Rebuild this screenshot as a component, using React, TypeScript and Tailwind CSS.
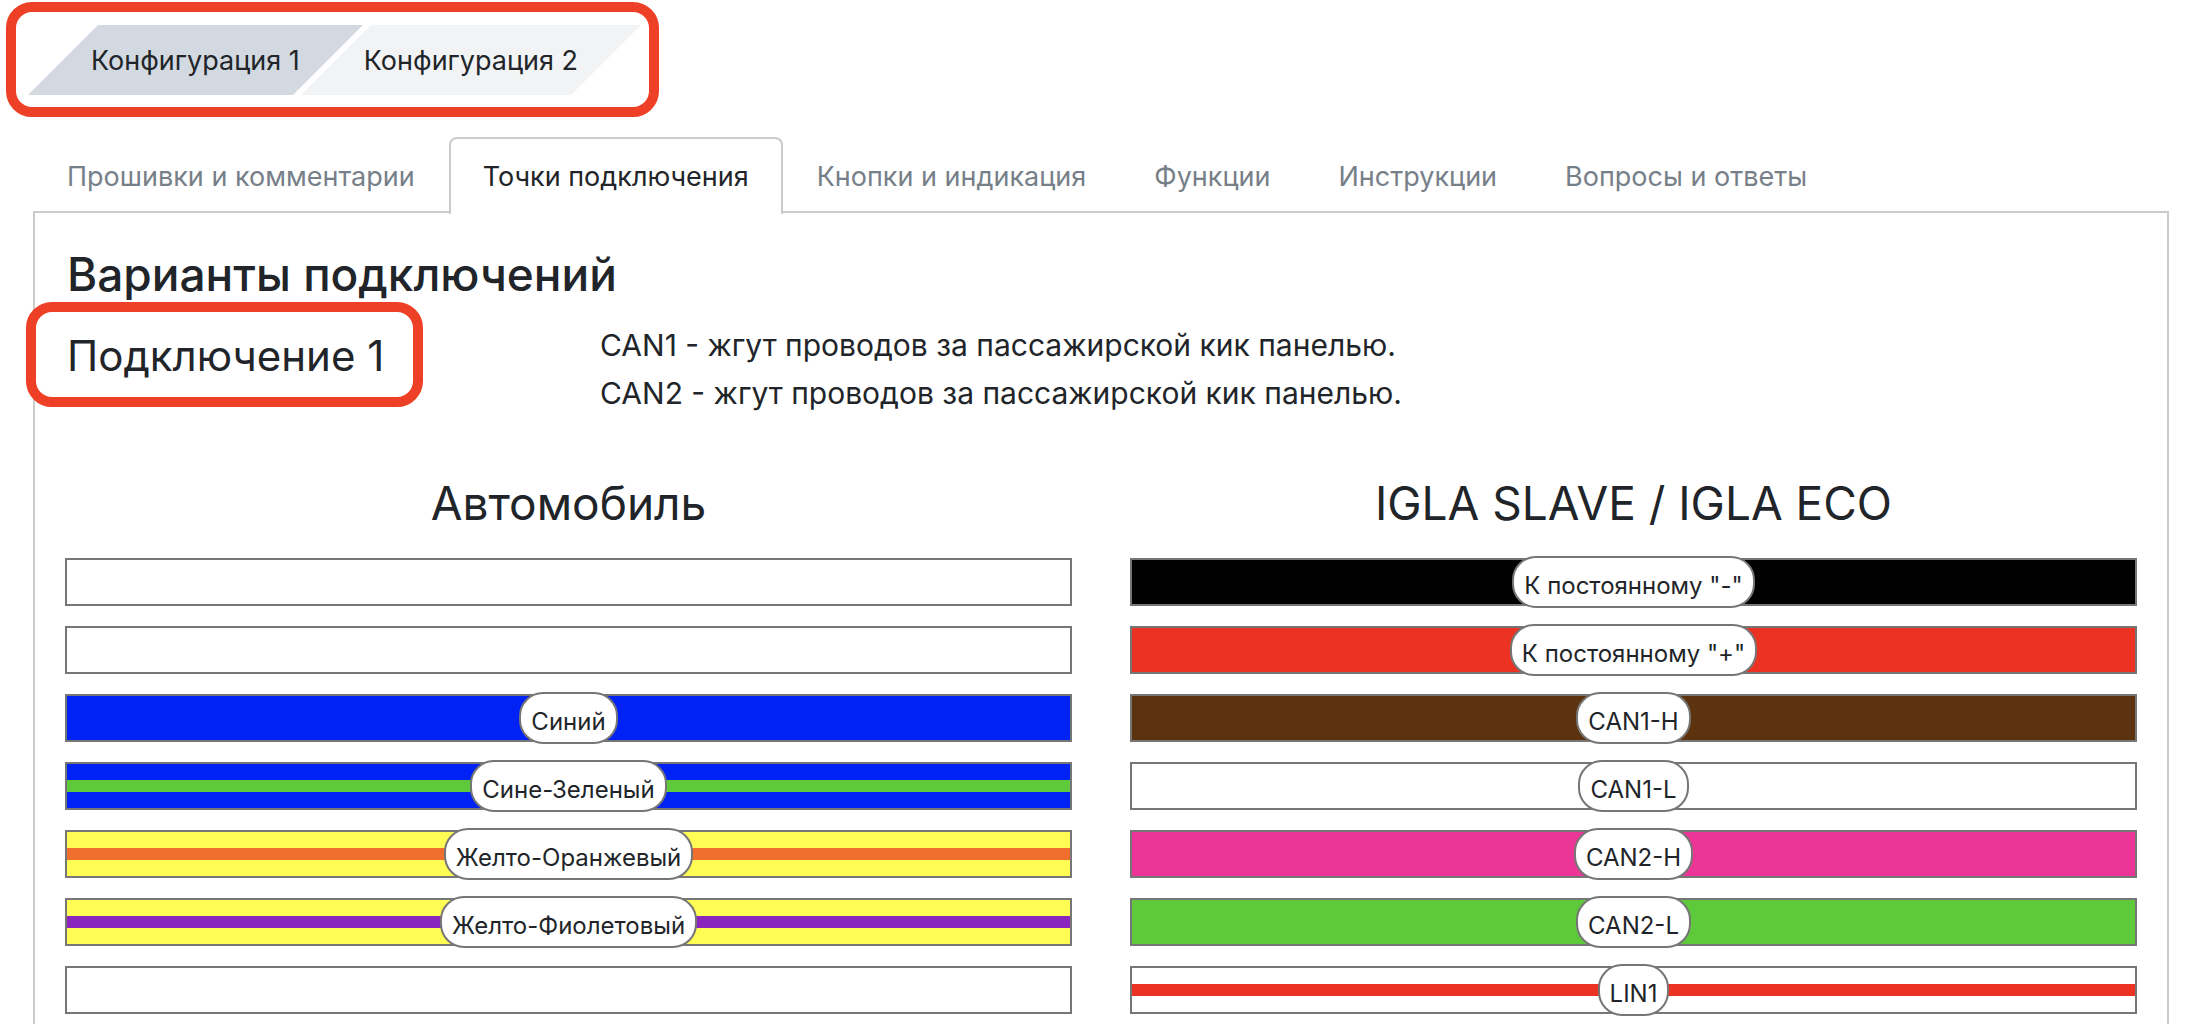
import React, { useState } from 'react';

interface Wire {
  label?: string;
  color: string;
  stripe?: string;
}

const CONFIGURATIONS = ['Конфигурация 1', 'Конфигурация 2'];

const TABS = [
  'Прошивки и комментарии',
  'Точки подключения',
  'Кнопки и индикация',
  'Функции',
  'Инструкции',
  'Вопросы и ответы',
];

const CAR_WIRES: Wire[] = [
  { color: 'bg-white' },
  { color: 'bg-white' },
  { label: 'Синий', color: 'bg-[#0022f5]' },
  { label: 'Сине-Зеленый', color: 'bg-[#0022f5]', stripe: 'bg-[#5ec93b]' },
  { label: 'Желто-Оранжевый', color: 'bg-[#fffd54]', stripe: 'bg-[#f06e2e]' },
  { label: 'Желто-Фиолетовый', color: 'bg-[#fffd54]', stripe: 'bg-[#8a25bd]' },
  { color: 'bg-white' },
];

const IGLA_WIRES: Wire[] = [
  { label: 'К постоянному "-"', color: 'bg-black' },
  { label: 'К постоянному "+"', color: 'bg-[#ec3323]' },
  { label: 'CAN1-H', color: 'bg-[#5c330e]' },
  { label: 'CAN1-L', color: 'bg-white' },
  { label: 'CAN2-H', color: 'bg-[#eb3697]' },
  { label: 'CAN2-L', color: 'bg-[#5ec93b]' },
  { label: 'LIN1', color: 'bg-white', stripe: 'bg-[#ec3323]' },
];

function WireBar({ label, color, stripe }: Wire) {
  return (
    <li className={`relative flex h-12 flex-col justify-center border-2 border-[#767676] ${color}`}>
      {stripe && <div className={`h-3 ${stripe}`} />}
      {label && (
        <div className="absolute -inset-1 flex justify-center">
          <span className="rounded-[24px] border-2 border-[#767676] bg-white px-[10px] pt-2 text-[24px] leading-10 whitespace-nowrap">
            {label}
          </span>
        </div>
      )}
    </li>
  );
}

function WireColumn({ title, wires }: { title: string; wires: Wire[] }) {
  return (
    <section>
      <h3 className="mb-[25px] text-center text-[46px] leading-[60px]">{title}</h3>
      <ul className="flex flex-col gap-5">
        {wires.map((wire, i) => (
          <WireBar key={i} {...wire} />
        ))}
      </ul>
    </section>
  );
}

export default function App() {
  const [config, setConfig] = useState(0);
  const [tab, setTab] = useState(1);

  return (
    <div className="h-screen overflow-hidden bg-white pt-[25px] pr-[35px] pl-[33px] font-['Inter','Liberation_Sans',sans-serif] text-[#212529]">
      {/* Configuration switcher */}
      <div className="ml-[30px] flex w-max gap-2">
        {CONFIGURATIONS.map((name, i) => (
          <button
            key={name}
            type="button"
            onClick={() => setConfig(i)}
            className="relative h-[70px] px-7 pt-[2px] text-[27px] whitespace-nowrap"
          >
            <span
              className={`absolute inset-0 -skew-x-45 ${config === i ? 'bg-[#d3d9e1]' : 'bg-[#f1f3f5]'}`}
            />
            <span className="relative">{name}</span>
          </button>
        ))}
      </div>
      <div className="pointer-events-none absolute top-[2px] left-[6px] h-[115px] w-[653px] rounded-[26px] border-10 border-[#ee4026]" />

      {/* Tabs */}
      <div role="tablist" className="relative z-10 mt-[42px] -mb-[3px] flex">
        {TABS.map((name, i) => (
          <button
            key={name}
            type="button"
            role="tab"
            aria-selected={tab === i}
            onClick={() => setTab(i)}
            className={`rounded-t-lg border-2 border-b-0 px-8 pt-4 pb-[15px] text-[27px] leading-[44px] whitespace-nowrap ${
              tab === i ? 'border-[#c9cbcd] bg-white text-[#212529]' : 'border-transparent text-[#777f89]'
            }`}
          >
            {name}
          </button>
        ))}
      </div>

      <main role="tabpanel" className="border-2 border-[#c9cbcd] pt-8 pb-8">
        <h1 className="mb-[18px] px-8 text-[46px] leading-[58px] font-medium">Варианты подключений</h1>
        <div className="grid grid-cols-4">
          <div className="px-8 pt-2">
            <h2 className="relative w-max text-[42px] leading-[54px]">
              Подключение 1
              <span className="pointer-events-none absolute -top-[27px] -right-[39px] -bottom-6 -left-[41px] rounded-[26px] border-10 border-[#ee4026]" />
            </h2>
          </div>
          <div className="col-span-3 px-8 text-[30px] leading-[48px]">
            <p>CAN1 - жгут проводов за пассажирской кик панелью.</p>
            <p>CAN2 - жгут проводов за пассажирской кик панелью.</p>
          </div>
        </div>
        <div className="mt-14 grid grid-cols-2 gap-x-[58px] px-[30px]">
          <WireColumn title="Автомобиль" wires={CAR_WIRES} />
          <WireColumn title="IGLA SLAVE / IGLA ECO" wires={IGLA_WIRES} />
        </div>
      </main>
    </div>
  );
}
